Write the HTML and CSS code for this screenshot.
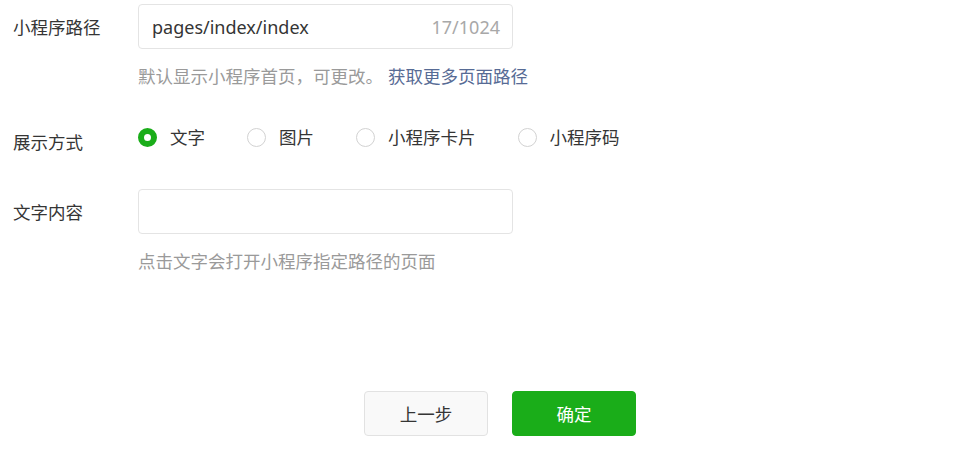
FILE: index.html
```html
<!DOCTYPE html>
<html lang="zh-CN">
<head>
<meta charset="utf-8">
<title>小程序路径</title>
<link rel="stylesheet" href="styles.css">
</head>
<body>
<div class="form">
  <div class="row row-first">
    <div class="label">小程序路径</div>
    <div class="control">
      <div class="input">
        <span class="value">pages/index/index</span>
        <span class="counter">17/1024</span>
      </div>
      <div class="hint">默认显示小程序首页，可更改。<a class="link">获取更多页面路径</a></div>
    </div>
  </div>

  <div class="row row-radio">
    <div class="label label-radio">展示方式</div>
    <div class="radios">
      <label class="radio"><span class="dot checked"></span><span class="rtext">文字</span></label>
      <label class="radio"><span class="dot"></span><span class="rtext">图片</span></label>
      <label class="radio"><span class="dot"></span><span class="rtext">小程序卡片</span></label>
      <label class="radio"><span class="dot"></span><span class="rtext">小程序码</span></label>
    </div>
  </div>

  <div class="row row-text">
    <div class="label">文字内容</div>
    <div class="control">
      <div class="input"></div>
      <div class="hint">点击文字会打开小程序指定路径的页面</div>
    </div>
  </div>

  <div class="actions">
    <button class="btn btn-default">上一步</button>
    <button class="btn btn-primary">确定</button>
  </div>
</div>
</body>
</html>
```

FILE: styles.css
```css
html, body {
  margin: 0;
  padding: 0;
  background: #ffffff;
}

body {
  font-family: "Noto Sans", "Noto Sans CJK SC", sans-serif;
  font-size: 17.5px;
  color: #353535;
}

.form {
  padding-left: 13px;
  display: flex;
  flex-direction: column;
}

.row {
  display: flex;
  align-items: flex-start;
}

.row-first {
  margin-top: 4px;
}

.label {
  width: 125px;
  flex: none;
  line-height: 46px;
  font-family: "Noto Sans CJK SC", sans-serif;
  font-size: 17.5px;
  color: #353535;
}

.control {
  display: flex;
  flex-direction: column;
}

.input {
  box-sizing: border-box;
  width: 375px;
  height: 45px;
  border: 1px solid #e4e4e4;
  border-radius: 4px;
  display: flex;
  align-items: center;
  justify-content: space-between;
  padding: 0 12px 0 13px;
}

.value {
  color: #353535;
  font-family: "Noto Sans", sans-serif;
  font-size: 18px;
}

.counter {
  color: #a8a8a8;
  font-family: "Noto Sans", sans-serif;
  font-size: 18px;
}

.hint {
  margin-top: 15px;
  line-height: 24px;
  color: #9a9a9a;
  font-family: "Noto Sans CJK SC", sans-serif;
  font-size: 17.5px;
}

.link {
  color: #576b95;
  text-decoration: none;
  margin-left: 5px;
}

.row-radio {
  margin-top: 35px;
}

.label-radio {
  line-height: 24px;
  padding-top: 7px;
}

.radios {
  display: flex;
  align-items: center;
  gap: 42px;
  height: 24px;
  padding-top: 2px;
}

.radio {
  display: flex;
  align-items: center;
  gap: 13px;
  font-family: "Noto Sans CJK SC", sans-serif;
  font-size: 17.5px;
  color: #353535;
}

.dot {
  box-sizing: border-box;
  width: 19px;
  height: 19px;
  border-radius: 50%;
  border: 1px solid #d2d2d2;
  background: #ffffff;
}

.dot.checked {
  border: 6px solid #1aad19;
}

.rtext {
  line-height: 24px;
}

.row-text {
  margin-top: 35px;
}

.actions {
  display: flex;
  gap: 24px;
  margin-top: 118px;
  padding-left: 351px;
}

.btn {
  box-sizing: border-box;
  width: 124px;
  height: 45px;
  border-radius: 4px;
  font-family: "Noto Sans CJK SC", sans-serif;
  font-size: 17.5px;
  padding: 0;
  cursor: pointer;
}

.btn-default {
  background: #f9f9f9;
  border: 1px solid #e2e2e2;
  color: #353535;
}

.btn-primary {
  background: #1aad19;
  border: 1px solid #1aad19;
  color: #ffffff;
}
```
